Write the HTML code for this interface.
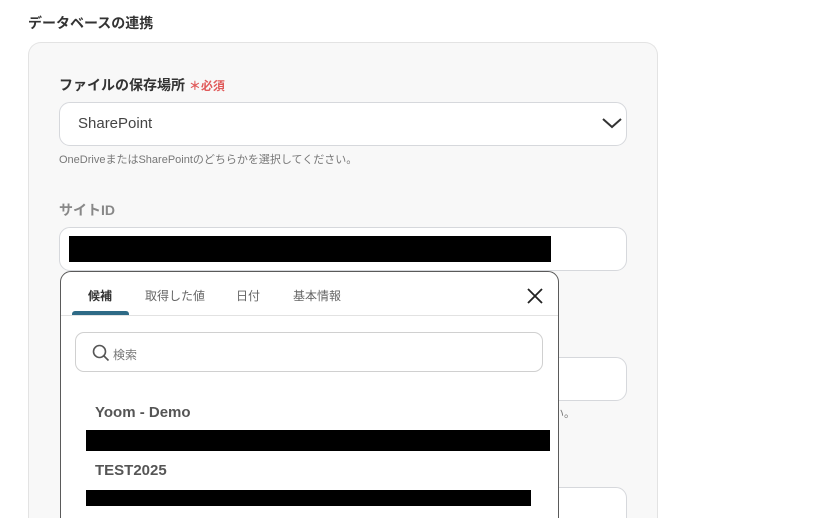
<!DOCTYPE html>
<html style="height:518px;overflow:hidden"><head><meta charset="utf-8"><style>
*{box-sizing:border-box;margin:0;padding:0}
body{width:834px;height:518px;overflow:hidden;background:#fff;font-family:"Liberation Sans","Noto Sans CJK JP",sans-serif;position:relative}
.a{position:absolute}
.inp{position:absolute;background:#fff;border:1px solid #d6d8dc;border-radius:11px}
.blk{position:absolute;background:#000}
</style></head><body>
<div class="a" style="left:28px;top:13px;font-size:14px;font-weight:bold;color:#333">データベースの連携</div>
<div class="a" style="left:28px;top:42px;width:630px;height:476px;background:#f8f8f8;border:1px solid #e3e3e3;border-bottom:none;border-radius:13px 13px 0 0"></div>
<div class="a" style="left:59px;top:75px;font-size:14px;font-weight:bold;color:#333">ファイルの保存場所 <span style="color:#e05a5a;font-size:12px">＊必須</span></div>
<div class="inp" style="left:59px;top:102px;width:568px;height:44px"></div>
<div class="a" style="left:78px;top:115px;font-size:15px;color:#444">SharePoint</div>
<svg class="a" style="left:601px;top:116px" width="22" height="14" viewBox="0 0 22 14"><path d="M2 3 L11 11 L20 3" fill="none" stroke="#333" stroke-width="2"/></svg>
<div class="a" style="left:59px;top:151px;font-size:11px;color:#777">OneDriveまたはSharePointのどちらかを選択してください。</div>
<div class="a" style="left:59px;top:200px;font-size:14px;font-weight:bold;color:#888">サイトID</div>
<div class="inp" style="left:59px;top:227px;width:568px;height:44px"></div>
<div class="blk" style="left:69px;top:236px;width:482px;height:26px"></div>
<div class="inp" style="left:540px;top:357px;width:87px;height:44px"></div>
<div class="a" style="left:553px;top:405px;font-size:11px;color:#777">い。</div>
<div class="inp" style="left:540px;top:487px;width:87px;height:44px"></div>
<div class="a" style="left:60px;top:271px;width:499px;height:260px;background:#fff;border:1px solid #5a5a5a;border-radius:11px"></div>
<div class="a" style="left:61px;top:315px;width:497px;height:1px;background:#e2e2e2"></div>
<div class="a" style="left:72px;top:311px;width:57px;height:4px;background:#2e6a86;border-radius:3px 3px 0 0"></div>
<div class="a" style="left:88px;top:287px;font-size:12px;font-weight:bold;color:#333">候補</div>
<div class="a" style="left:145px;top:287px;font-size:12px;color:#666">取得した値</div>
<div class="a" style="left:236px;top:287px;font-size:12px;color:#666">日付</div>
<div class="a" style="left:293px;top:287px;font-size:12px;color:#666">基本情報</div>
<svg class="a" style="left:527px;top:288px" width="16" height="16" viewBox="0 0 16 16"><path d="M1 1 L15 15 M15 1 L1 15" stroke="#222" stroke-width="1.8"/></svg>
<div class="a" style="left:75px;top:332px;width:468px;height:40px;border:1px solid #d0d0d0;border-radius:9px"></div>
<svg class="a" style="left:92px;top:344px" width="18" height="18" viewBox="0 0 18 18"><circle cx="7.5" cy="7.5" r="6" fill="none" stroke="#555" stroke-width="1.6"/><path d="M12 12 L16.5 16.5" stroke="#555" stroke-width="1.6"/></svg>
<div class="a" style="left:113px;top:346px;font-size:12px;color:#777">検索</div>
<div class="a" style="left:95px;top:404px;font-size:15px;font-weight:bold;color:#555">Yoom - Demo</div>
<div class="blk" style="left:86px;top:430px;width:464px;height:21px"></div>
<div class="a" style="left:95px;top:462px;font-size:15px;font-weight:bold;color:#555">TEST2025</div>
<div class="blk" style="left:86px;top:490px;width:445px;height:16px"></div>
</body></html>
